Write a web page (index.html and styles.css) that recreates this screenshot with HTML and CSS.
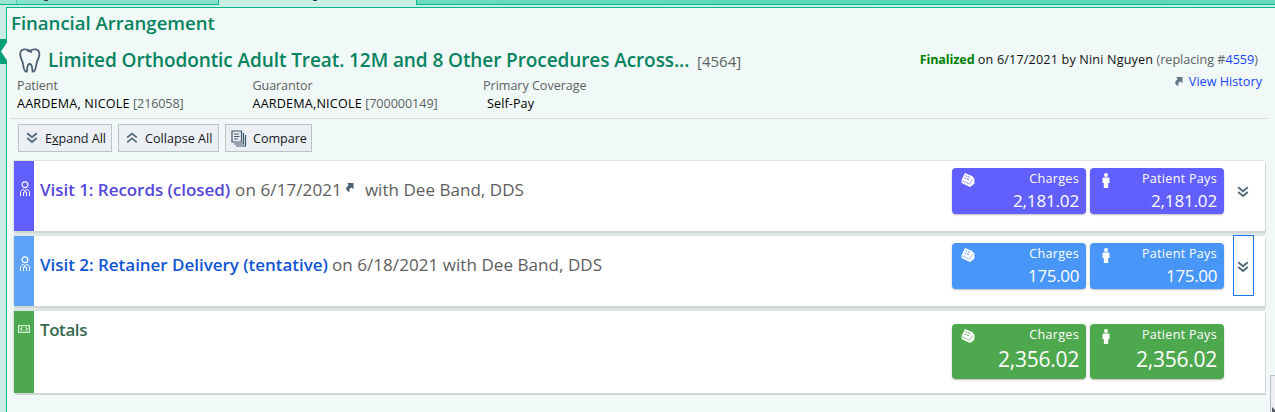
FILE: index.html
```html
<!DOCTYPE html>
<html lang="en">
<head>
<meta charset="utf-8">
<title>Financial Arrangement</title>
<link rel="stylesheet" href="styles.css">
</head>
<body>
<svg class="defs" aria-hidden="true">
  <symbol id="down" viewBox="0 0 12 12"><path d="M1.2 1.2 6 5.2l4.800-4M1.200 6 6 10l4.800-4" fill="none" stroke="currentColor" stroke-width="1.900"/></symbol>
  <symbol id="up" viewBox="0 0 12 12"><path d="M1.200 5.500 6 1.500l4.800 4M1.200 10.300 6 6.300l4.800 4" fill="none" stroke="currentColor" stroke-width="1.700"/></symbol>
  <symbol id="jump" viewBox="0 0 9 10"><path d="M2.200 0H8.500V6.300L6.500 4.600C4.500 5.400 4 6.600 4.600 9 1.400 8.500-.6 5.300 3.600 2.200Z" fill="currentColor"/></symbol>
  <symbol id="person" viewBox="0 0 10 15"><circle cx="5" cy="3.700" r="2.900" fill="none" stroke="#fff" stroke-width="1.200"/><path d="M.5 15V10.500L2.500 8.500H3.500L5 10.500 6.500 8.500H7.500L9.500 10.500V15M3.500 15V11M5 10V12M6.500 11V15" fill="none" stroke="#fff" stroke-width="1"/></symbol>
  <symbol id="cash" viewBox="0 0 12 8"><path d="M.6.600H11.400V7.400H.600ZM4.400 2.200 2.800 4 4.400 5.800M7.600 2.200 9.200 4 7.600 5.800" fill="none" stroke="#d9f5d8" stroke-width="1.200"/></symbol>
  <symbol id="register" viewBox="0 0 14 14"><path d="M4 0 11.500 3.200 13.400 5.800V10.800L9 14 .500 10V7Z" fill="#fff"/><path d="M4.500 2.700 9.500 4.800M3.500 4.900 8.500 7" stroke="var(--tone)" stroke-width=".9" stroke-dasharray="2 .7" fill="none"/><path d="M.8 7.600 8.500 11.200 11.500 6.500" stroke="var(--tone)" stroke-width=".6" fill="none"/></symbol>
  <symbol id="man" viewBox="0 0 8 15"><circle cx="4" cy="2" r="2" fill="#fff"/><path d="M1.500 4.600H6.500Q7.500 4.600 7.500 5.600V10H6.200V15H1.800V10H.500V5.600Q.5 4.600 1.500 4.600Z" fill="#fff"/></symbol>
</svg>
<div class="tabs"><div class="tab first"></div><div class="tab second"><i class="descender"></i></div><div class="tab active"><i class="descender"></i></div><div class="tab rest"></div></div>
<div class="shell">
  <div class="rail"><svg class="notch" width="7" height="25" viewBox="0 0 7 25"><path d="M0 0H7V25H0Z" fill="#009f78"/><path d="M7 3.500V21.500L1 12.500Z" fill="#f0f9f7"/></svg></div>
  <main class="panel">
    <h1 class="heading">Financial Arrangement</h1>
    <header class="summary">
      <div class="plan">
        <div class="title-row">
          <svg class="tooth" width="22" height="25" viewBox="0 0 22 25"><path d="M11 2.800C7.500.500 1.200.300 1.200 6.500c0 3.500 2.300 5.500 2.800 9.500.5 3.500 1 7.500 3 7.500h.8c.6-4 .2-7.500 2.900-7.500s2.300 3.500 2.900 7.500h.8c2 0 2.500-4 3-7.500.5-4 3-6 3-9.500 0-6.200-6-6-9.400-3.700ZM8 2.400 13 4.200" fill="none" stroke="#4d6073" stroke-width="1.800"/></svg>
          <h2 class="title">Limited Orthodontic Adult Treat. 12M and 8 Other Procedures Across...</h2>
          <span class="plan-id">[4564]</span>
        </div>
        <div class="facts">
          <div class="fact patient"><div class="label">Patient</div><div class="value"><span class="name">AARDEMA, NICOLE</span> <span class="muted">[216058]</span></div></div>
          <div class="fact guarantor"><div class="label">Guarantor</div><div class="value"><span class="name">AARDEMA,NICOLE</span> <span class="muted wide-id">[700000149]</span></div></div>
          <div class="fact coverage"><div class="label wide">Primary Coverage</div><div class="value self-pay">Self-Pay</div></div>
        </div>
      </div>
      <div class="status">
        <div class="state"><b class="final">Finalized</b> <span class="when">on 6/17/2021 by Nini Nguyen</span> <span class="muted plain">(replacing #<a class="link ref">4559</a>)</span></div>
        <div class="history"><svg class="jump" width="9" height="10"><use href="#jump"/></svg><a class="link">View History</a></div>
      </div>
    </header>
    <div class="toolbar">
      <button class="btn expand"><svg width="12" height="12"><use href="#down"/></svg><span>E<u>x</u>pand All</span></button>
      <button class="btn collapse"><svg width="12" height="12"><use href="#up"/></svg><span>Collapse All</span></button>
      <button class="btn compare"><svg width="16" height="17" viewBox="0 0 16 17"><path d="M1 1H10.500V12H1ZM3 4H8M3 6.500H8.500M3 9H7M12.500 3V14H3M14.500 5V16H5" fill="none" stroke="#3f556a" stroke-width="1.200"/></svg><span>Compare</span></button>
    </div>
    <section class="cards">
      <article class="card visit closed">
        <div class="band"><svg width="10" height="15"><use href="#person"/></svg></div>
        <div class="text"><b class="visit-name">Visit 1: Records (closed)</b><span class="date">on 6/17/2021</span><svg class="inline-jump" width="9" height="10"><use href="#jump"/></svg><span class="with">with Dee Band, DDS</span></div>
        <div class="tiles">
          <div class="tile"><svg width="14" height="14"><use href="#register"/></svg><div class="tile-label">Charges</div><div class="amount">2,181.02</div></div>
          <div class="tile"><svg class="man" width="8" height="15"><use href="#man"/></svg><div class="tile-label">Patient Pays</div><div class="amount">2,181.02</div></div>
        </div>
        <div class="toggle"><svg width="12" height="12"><use href="#down"/></svg></div>
      </article>
      <article class="card visit tentative">
        <div class="band"><svg width="10" height="15"><use href="#person"/></svg></div>
        <div class="text"><b class="visit-name">Visit 2: Retainer Delivery (tentative)</b><span class="date">on 6/18/2021 with Dee Band, DDS</span></div>
        <div class="tiles">
          <div class="tile"><svg width="14" height="14"><use href="#register"/></svg><div class="tile-label">Charges</div><div class="amount short">175.00</div></div>
          <div class="tile"><svg class="man" width="8" height="15"><use href="#man"/></svg><div class="tile-label">Patient Pays</div><div class="amount short">175.00</div></div>
        </div>
        <div class="toggle focused"><svg width="12" height="12"><use href="#down"/></svg></div>
      </article>
      <article class="card totals">
        <div class="band"><svg width="12" height="8"><use href="#cash"/></svg></div>
        <div class="text"><b class="visit-name">Totals</b></div>
        <div class="tiles">
          <div class="tile"><svg width="14" height="14"><use href="#register"/></svg><div class="tile-label">Charges</div><div class="amount">2,356.02</div></div>
          <div class="tile"><svg class="man" width="8" height="15"><use href="#man"/></svg><div class="tile-label">Patient Pays</div><div class="amount">2,356.02</div></div>
        </div>
      </article>
    </section>
    <div class="corner"><svg width="4" height="6" viewBox="0 0 4 6"><path d="M1 0 4 3V6H1Z" fill="#555c66"/></svg></div>
  </main>
</div>
</body>
</html>
```
FILE: styles.css
```css
* { box-sizing: border-box; }
body { margin: 0; width: 1275px; height: 412px; overflow: hidden; background: #caede4; font-family: "Open Sans", sans-serif; font-size: 12.6px; line-height: 18px; color: #111; white-space: nowrap; }
h1, h2 { margin: 0; font-weight: 600; }
svg { display: block; flex: none; }
.defs { position: absolute; width: 0; height: 0; }

.tabs { display: flex; height: 7px; }
.tab { height: 5px; background: #85e2c9; border-bottom: 1px solid #00b88f; }
.first { width: 17px; background: #9be6d3; border-right: 1px solid #4ccbaa; }
.second { width: 202px; padding-left: 27px; border-right: 1px solid #00b88f; }
.active { width: 197px; padding-left: 94px; background: none; border: 0; }
.rest { flex: 1; background: linear-gradient(90deg, #6ddcc0, #55d8b5 60%, #66dabd); border-left: 1px solid #00b88f; }
.descender { display: block; width: 4px; height: 1px; background: #244; }

.shell { display: flex; height: 405px; }
.rail { width: 6px; padding-top: 32px; }
.notch { position: relative; z-index: 1; }
.panel { position: relative; flex: 1; border: solid #00b88f; border-width: 1px 0 0 1px; background: #f0f9f7; }
.heading { margin: 2px 0 0 4px; font-size: 18.6px; line-height: 26px; letter-spacing: -.02px; color: #078360; }

.summary { display: flex; justify-content: space-between; height: 83px; margin: 0 6px 0 3px; padding: 11px 0 0 7px; border-bottom: 1px solid #d7dedd; }
.title-row { display: flex; height: 30px; }
.tooth { margin: 1px 0 0 2px; }
.title { margin-left: 7px; font-size: 19px; line-height: 26px; letter-spacing: -.09px; color: #078360; width: 642px; }
.plan-id { margin-left: 7px; font-size: 15px; line-height: 29px; color: #5a5f61; }
.facts { display: flex; }
.patient { width: 235.5px; }
.guarantor { width: 230.5px; }
.label { letter-spacing: -.1px; color: #5c6163; }
.wide { letter-spacing: -.04px; }
.name { letter-spacing: .19px; color: #000; }
.muted { letter-spacing: -.13px; color: #5c6163; }
.wide-id { letter-spacing: -.05px; }
.plain { letter-spacing: 0; }
.self-pay { padding-left: 4px; letter-spacing: .1px; color: #000; }
.status { padding: 4px 7px 0 0; }
.state { padding-right: 4px; }
.final { color: #008000; letter-spacing: -.11px; }
.when { letter-spacing: .17px; }
.link { color: #1943ff; }
.history { display: flex; justify-content: flex-end; margin-top: 4px; letter-spacing: .03px; }
.jump { margin: 4px 6px 0 0; color: #637788; }

.toolbar { display: flex; gap: 6px; margin: 5px 0 0 11px; }
.btn { display: flex; height: 28px; padding: 0 0 0 7px; align-items: center; border: 1px solid #bac4c6; background: #ecf0f4; color: #17181c; font: inherit; }
.btn svg { color: #526b7c; }
.expand { width: 94px; }
.collapse { width: 101px; }
.compare { width: 87px; padding-left: 5px; }
.btn span { margin-left: 7px; padding-top: 2px; letter-spacing: -.03px; }
.btn.collapse span { letter-spacing: .02px; }
.btn.compare span { margin-left: 6px; }

.cards { display: flex; flex-direction: column; gap: 5px; width: 1255px; margin: 7px 0 0 5px; padding: 2px 2px 3px; background: #dde5e3; background-clip: content-box; }
.card { display: flex; height: 70px; background: #fff; box-shadow: 1px 2px 0 #cdd7d4, -1px -1px 1px #dde5e3; }
.band { display: flex; justify-content: center; width: 20px; padding: 20px 0 0 1px; }
.text { display: flex; flex: 1; padding: 17px 0 0 6px; font-size: 17px; line-height: 24px; color: #5e5e5e; }
.visit-name { font-weight: 600; letter-spacing: -.05px; }
.date { margin-left: 5px; letter-spacing: .1px; }
.inline-jump { margin: 5px 0 0 3px; color: #4a6073; }
.with { margin-left: 11px; letter-spacing: .04px; }
.closed { --tone: #625fff; }
.closed .band { background: #625fff; }
.closed .visit-name { color: #5546dc; }
.tentative { --tone: #4896f7; }
.tentative .band { background: #5da1f9; }
.tentative .visit-name { color: #1055d2; letter-spacing: -.03px; }
.tentative .date { margin-left: 4px; letter-spacing: .06px; }

.tiles { display: flex; gap: 4px; padding-top: 7px; }
.tile { display: grid; grid-template-columns: 14px 1fr; grid-template-rows: 21px 24px; width: 134px; height: 46px; padding: 0 7px 0 9px; border-radius: 4px; background: var(--tone); box-shadow: 0 1px 2px #0004; color: #fff; text-align: right; }
.tile svg { margin-top: 5px; }
.tile .man { margin-left: 3px; }
.tile-label { margin-top: 2px; letter-spacing: .28px; }
.amount { grid-column: 1 / 3; font-size: 17px; line-height: 24px; letter-spacing: -.15px; }
.short { letter-spacing: -.35px; }
.toggle { width: 21px; height: 61px; margin: -1px 11px 0 9px; padding: 26px 0 0 4px; color: #526b7c; }
.focused { padding: 25px 0 0 3px; border: 1px solid #1677ed; }

.totals { --tone: #4ea84e; height: 82px; padding-right: 41px; }
.totals .band { background: #4ea84e; padding: 14px 1px 0 0; }
.totals .text { padding-top: 7px; }
.totals .visit-name { color: #38694f; letter-spacing: -.43px; }
.totals .tiles { padding-top: 13px; }
.totals .tile { height: 55px; grid-template-rows: 21px 32px; }
.totals .amount { font-size: 21px; line-height: 29px; letter-spacing: -.25px; }
.corner { position: absolute; right: 0; bottom: 0; width: 5px; height: 37px; border: solid #b7bec4; border-width: 1px 0 0 1px; background: #eef0f5; padding-top: 31px; }
```
